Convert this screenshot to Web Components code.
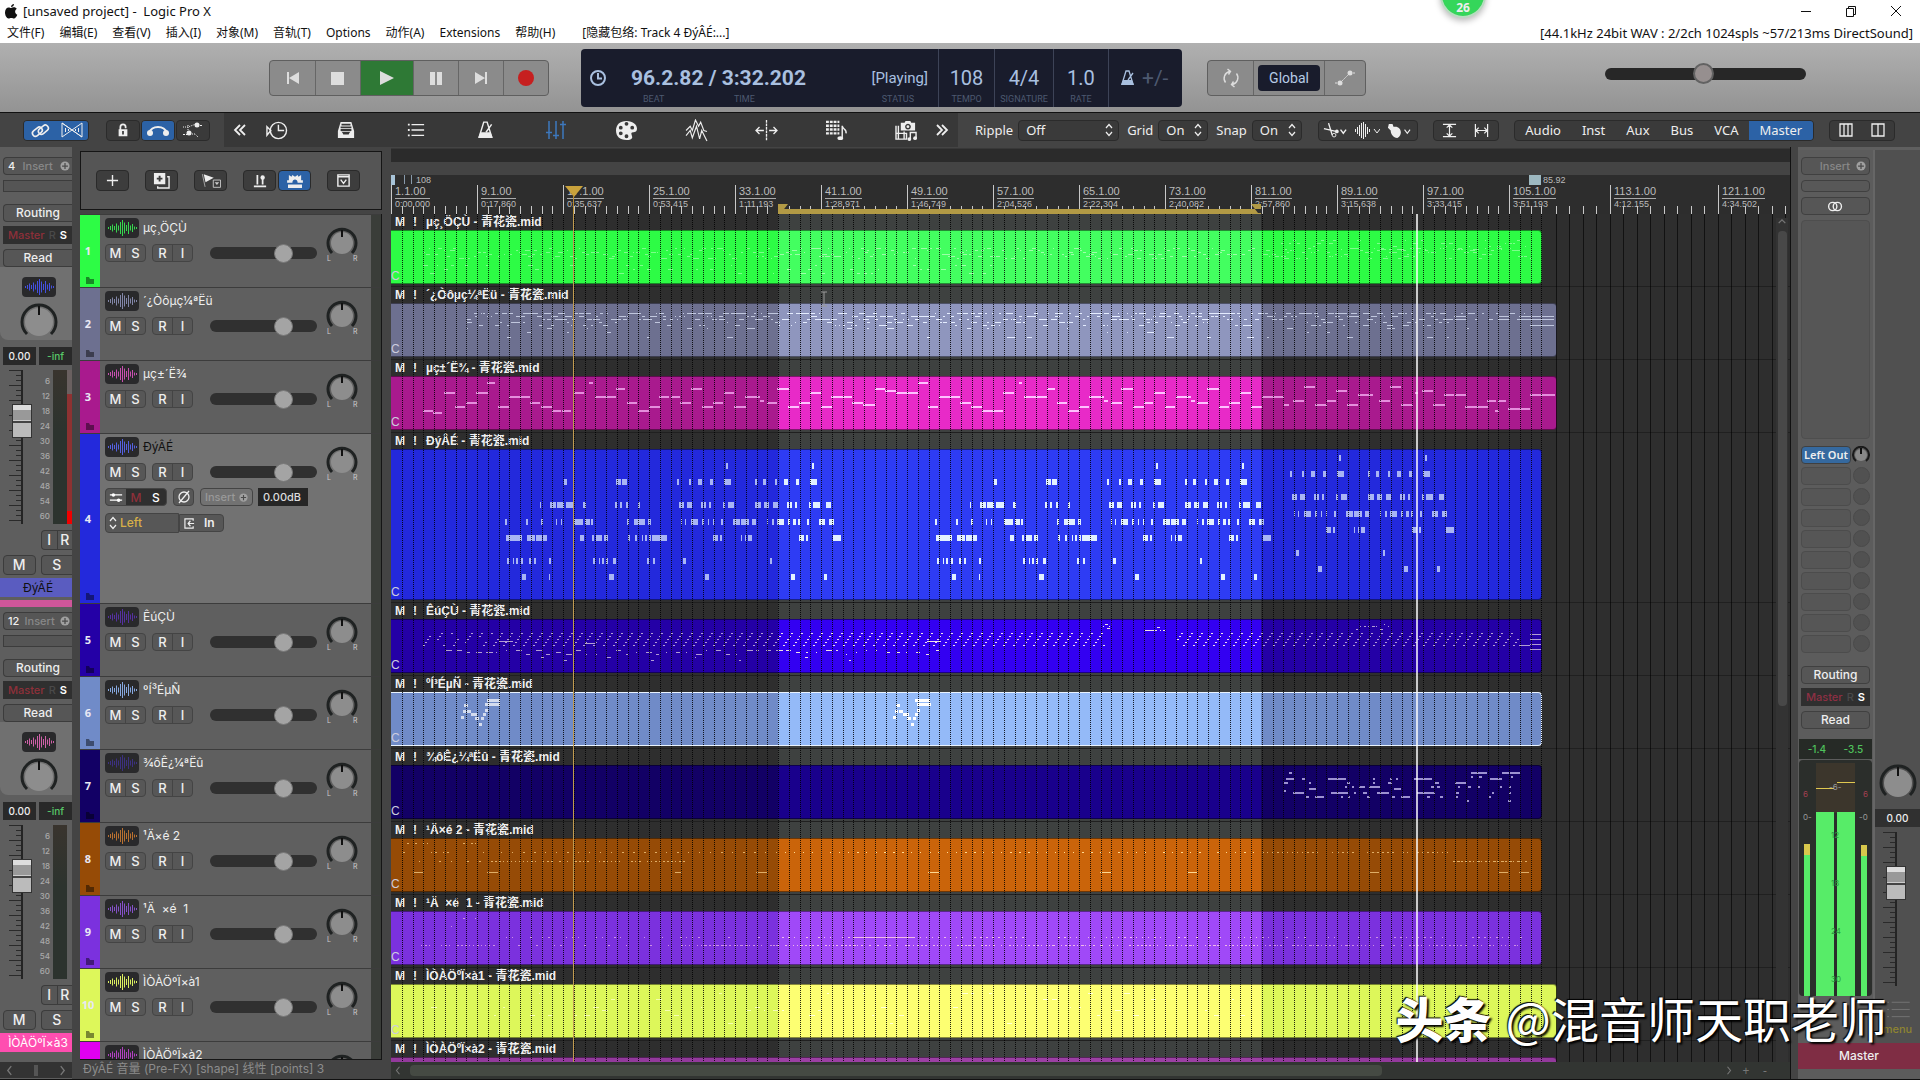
<!DOCTYPE html>
<html lang="zh-CN">
<head>
<meta charset="utf-8">
<title>[unsaved project] - Logic Pro X</title>
<style>
  html, body {
    margin: 0;
    height: 100%;
    overflow: hidden;
    background: #444;
  }
  body {
    --ui: "Noto Sans", "Noto Sans CJK SC", sans-serif;
    --strip: Inter, "Noto Sans CJK SC", sans-serif;
    --blue: #2c62a6;
    --line: #2b2b2b;
    font: 12px/16px var(--ui);
    color: #eee;
  }
</style>
</head>
<body>
<daw-app></daw-app>

<script>
const icons = {
  apple: ["0 0 16 16", `<path fill="currentColor" d="M11 1c0 2-1.400 3-3 3 0-1.700 1.300-2.800 3-3zM8 5c1 0 1.600-.7 3-.7 1.200 0 2.200.6 2.800 1.500-2.500 1.500-2 5 .5 6-.8 2-2 3.700-3.300 3.700-1 0-1.400-.6-2.700-.6s-1.700.6-2.700.6C3.600 15.500 2 12.300 2 9.500 2 6.400 3.800 4.500 5.700 4.500c1 0 1.600.5 2.300.5z"/>`],
  min: ["0 0 12 12", `<path stroke="currentColor" d="M1 6.500h10"/>`],
  restore: ["0 0 12 12", `<path fill="none" stroke="currentColor" d="M1.500 3.500h7v8h-7zM3.500 3.500v-2h7v8h-2"/>`],
  close: ["0 0 12 12", `<path stroke="currentColor" d="M1 1l10 10M11 1L1 11"/>`],
  rewind: ["0 0 16 16", `<path fill="currentColor" d="M2 2h2v12H2zM14 2v12L4 8z"/>`],
  stop: ["0 0 16 16", `<path fill="currentColor" d="M1 2h13v13H1z"/>`],
  play: ["0 0 16 16", `<path fill="currentColor" d="M1 1l14 7-14 7z"/>`],
  pause: ["0 0 16 16", `<path fill="currentColor" d="M2 2h5v13H2zM9 2h5v13H9z"/>`],
  forward: ["0 0 16 16", `<path fill="currentColor" d="M12 2h2v12h-2zM2 2v12l10-6z"/>`],
  record: ["0 0 16 16", `<circle cx="8" cy="8" r="8" fill="#c61f1f"/>`],
  clock: ["0 0 16 16", `<circle cx="8" cy="8" r="7" fill="none" stroke="currentColor" stroke-width="2"/><path fill="none" stroke="currentColor" stroke-width="2" d="M8 3v5.500h4"/>`],
  metro: ["0 0 16 16", `<path fill="none" stroke="currentColor" stroke-width="1.300" d="M6 1h3l4 13H2zM8 10l5-7"/><path fill="currentColor" d="M3 10h9l2 5H1z"/>`],
  loop: ["0 0 20 20", `<path fill="none" stroke="currentColor" stroke-width="1.400" d="M8.500 3.500a7 7 0 0 0-4 11M11.500 16.500a7 7 0 0 0 4-11M6.500 1l3 2.500-2 3M13.500 19l-3-2.500 2-3"/>`],
  points: ["0 0 20 20", `<path stroke="currentColor" stroke-dasharray="2 1" d="M5 15L15 5M0 15h5M15 5h5"/><circle cx="5" cy="15" r="2.500" fill="currentColor"/><circle cx="15" cy="5" r="2.500" fill="currentColor"/>`],
  envelope: ["0 0 22 18", `<path fill="none" stroke="currentColor" stroke-dasharray="1 1" d="M1 6h5l8-3M8 13h5l3 3M6 4v9"/><circle cx="7" cy="12" r="2.500" fill="currentColor"/><circle cx="15" cy="4" r="2.500" fill="currentColor"/><path stroke="currentColor" stroke-dasharray="2 1" d="M1 13.500h6M15 4.500h6"/>`],
  link: ["0 0 20 20", `<g fill="none" stroke="currentColor" stroke-width="1.600"><rect x="2" y="8" width="11" height="6" rx="3" transform="rotate(-40 7 11)"/><rect x="8" y="6" width="11" height="6" rx="3" transform="rotate(-40 13 9)"/></g>`],
  xfade: ["0 0 22 18", `<path fill="none" stroke="currentColor" d="M1 2v14L21 2v14zM1 2l20 14"/><path stroke="currentColor" d="M4.500 7v4M7.500 8v2M14.500 8v2M17.500 7v4"/>`],
  lock: ["0 0 16 16", `<path fill="none" stroke="currentColor" stroke-width="2" d="M5 8V4.500a3 3 0 0 1 6 0V6"/><path fill="currentColor" fill-rule="evenodd" d="M3 7h10v8H3zM7 9v4h2V9z"/>`],
  curve: ["0 0 24 12", `<path fill="none" stroke="currentColor" stroke-width="2" d="M3 9c3-8 15-8 18 0"/><circle cx="4" cy="9" r="3" fill="currentColor"/><circle cx="20" cy="9" r="3" fill="currentColor"/>`],
  left2: ["0 0 14 14", `<path fill="none" stroke="currentColor" stroke-width="1.800" d="M7 2L2 7l5 5M12 2L7 7l5 5"/>`],
  right2: ["0 0 14 14", `<path fill="none" stroke="currentColor" stroke-width="1.800" d="M2 2l5 5-5 5M7 2l5 5-5 5"/>`],
  history: ["0 0 24 22", `<circle cx="14" cy="11" r="8.500" fill="none" stroke="currentColor" stroke-width="1.500"/><path fill="none" stroke="currentColor" stroke-width="1.500" d="M14 5v6h6M2 7l4 4-4 5z"/>`],
  inbox: ["0 0 20 20", `<path fill="currentColor" fill-rule="evenodd" d="M4 1h12l3 10v8H1v-8zM5 3v2h10V3zM4 6v2h12V6zM4 9v2h12V9zM3 12c2 0 3 0 4 3h6c1-3 2-3 4-3z"/>`],
  list: ["0 0 20 20", `<path stroke="currentColor" stroke-width="1.500" d="M5 4h14M5 10h14M5 16h14"/><path stroke="currentColor" stroke-width="2" d="M1 4h2M1 10h2M1 16h2"/>`],
  mixer: ["0 0 22 20", `<path stroke="currentColor" stroke-width="1.500" d="M4 1v18M11 1v18M18 1v18M1 12.500h6M8 15.500h6M15 4.500h6"/>`],
  palette: ["0 0 24 22", `<path fill="currentColor" fill-rule="evenodd" d="M12 1c7 0 11 4 11 8s-3 4-5 4 0 3 0 5-3 3-6 3C5 21 1 17 1 11S5 1 12 1zM10 4a2 2 0 1 0 4 0 2 2 0 1 0-4 0zM4 8a2 2 0 1 0 4 0 2 2 0 1 0-4 0zM4 14a2 2 0 1 0 4 0 2 2 0 1 0-4 0zM16 8a2 2 0 1 0 4 0 2 2 0 1 0-4 0zM10 17a2 2 0 1 0 4 0 2 2 0 1 0-4 0z"/>`],
  wave: ["0 0 22 22", `<path fill="none" stroke="currentColor" stroke-width="1.100" d="M1 11l4-4 2 4L10 1l3 6 2-4 3 8 3 1M1 16l4-5 2 7 4-11 3 12 2-8 5 10"/>`],
  split: ["0 0 26 24", `<path fill="none" stroke="currentColor" stroke-width="1.500" d="M10 12H1M5 8l-4 4 4 4M16 12h9M21 8l4 4-4 4"/><path stroke="currentColor" stroke-width="1.500" stroke-dasharray="3 1" d="M13 0v24"/>`],
  gridnote: ["0 0 24 22", `<path stroke="currentColor" stroke-width="2.500" stroke-dasharray="3 1" d="M1 2h14M1 6h14M1 10h14M1 14h14"/><path fill="none" stroke="currentColor" stroke-width="1.500" d="M18 19V6c0 4 5 3 4 8"/><ellipse cx="16" cy="19" rx="3" ry="2" fill="currentColor"/>`],
  media: ["0 0 24 22", `<path fill="currentColor" fill-rule="evenodd" d="M6 3h4l1-2h5l1 2h4v8H6zM13.500 4a3 3 0 1 0 .1 0z"/><circle cx="13.500" cy="7" r="1.500" fill="currentColor"/><path fill="none" stroke="currentColor" stroke-width="1.500" d="M1 6v14h11v-6H1M3.500 6v14M9.500 12v8"/><path fill="none" stroke="currentColor" stroke-width="1.500" d="M16 20v-7h6v6"/><circle cx="15" cy="20" r="2" fill="currentColor"/><circle cx="21" cy="19" r="2" fill="currentColor"/>`],
  cut: ["0 0 26 18", `<path fill="none" stroke="currentColor" stroke-width="1.500" d="M1 7l13 3M6 1l4 13M19 8l3 4 3-4"/><circle cx="12" cy="14" r="2" fill="none" stroke="currentColor"/><circle cx="15" cy="10" r="2" fill="currentColor"/>`],
  wavedrop: ["0 0 26 18", `<path fill="none" stroke="currentColor" d="M1.500 8v3M3.500 6v7M5.500 4v11M7.500 2v15M9.500 1v17M11.500 3v13M13.500 6v7M15.500 8v3M20 8l3 4 3-4"/>`],
  tag: ["0 0 26 18", `<path fill="currentColor" d="M2 2h4l1 3c5-1 8 2 8 6 0 3-2 6-4 6-4 0-7-4-7-8L1 6z"/><path fill="none" stroke="currentColor" stroke-width="1.200" d="M19 8l3 4 3-4"/>`],
  vzoom: ["0 0 16 16", `<path fill="none" stroke="currentColor" stroke-width="1.300" d="M1 1.500h14M1 14.500h14M8 2v12M5 5l3-3 3 3M5 11l3 3 3-3"/>`],
  hzoom: ["0 0 16 16", `<path fill="none" stroke="currentColor" stroke-width="1.300" d="M1.500 1v14M14.500 1v14M2 8h12M5 5L2 8l3 3M11 5l3 3-3 3"/>`],
  cols4: ["0 0 14 14", `<path fill="none" stroke="currentColor" stroke-width="1.300" d="M1 1h12v12H1zM5 1v12M9 1v12"/>`],
  cols2: ["0 0 14 14", `<path fill="none" stroke="currentColor" stroke-width="1.300" d="M1 1h12v12H1zM7 1v12"/>`],
  plus: ["0 0 14 14", `<path stroke="currentColor" stroke-width="1.500" d="M7 1v12M1 7h12"/>`],
  dup: ["0 0 18 18", `<path fill="currentColor" fill-rule="evenodd" d="M1 1h12v12H1zM6 4v2H4v2h2v2h2V8h2V6H8V4z"/><path fill="none" stroke="currentColor" stroke-width="1.500" d="M15 5h2v12H5v-2"/>`],
  flag: ["0 0 22 16", `<path fill="currentColor" d="M3 1l11 4-9 5z"/><path stroke="#aaa" d="M1.500 1l3 14"/><path fill="none" stroke="#ccc" d="M13.500 7.500h8v8h-8z"/><path fill="#ccc" d="M15 10h5l-2.500 3z"/>`],
  meters: ["0 0 18 16", `<path stroke="currentColor" stroke-width="2" d="M2 14h14M6 1v11M12 5v7"/><circle cx="12" cy="4" r="2.500" fill="currentColor"/>`],
  crown: ["0 0 20 16", `<path fill="currentColor" d="M3 1l3 2 1-2 3 2 3-2 1 2 3-2v6h2v3h-6c0-5-6-5-6 0H1V7h2zM2 12h16v4H2z"/>`],
  popup: ["0 0 16 16", `<path fill="none" stroke="currentColor" stroke-width="1.500" d="M2 2h12v12H2zM2 4h12M5 7l3 4 3-4"/>`],
  add: ["0 0 12 12", `<circle cx="6" cy="6" r="5.500" fill="#a0a0a0"/><path stroke="#4a4a4a" stroke-width="1.500" d="M6 2.500v7M2.500 6h7"/>`],
  stereo: ["0 0 18 12", `<circle cx="6" cy="6" r="4.500" fill="none" stroke="currentColor" stroke-width="1.500"/><circle cx="11" cy="6" r="4.500" fill="none" stroke="currentColor" stroke-width="1.500"/>`],
  fx: ["0 0 16 12", `<path stroke="currentColor" stroke-width="1.500" d="M1 3h14M1 9h14"/><circle cx="5" cy="3" r="2" fill="currentColor"/><circle cx="11" cy="9" r="2" fill="currentColor"/>`],
  phase: ["0 0 14 14", `<circle cx="7" cy="7" r="5" fill="none" stroke="currentColor" stroke-width="1.300"/><path stroke="currentColor" stroke-width="1.300" d="M2 13L12 1"/>`],
  input: ["0 0 12 12", `<path fill="none" stroke="currentColor" stroke-width="1.300" d="M10 3V1H1v10h9V9M11 6H5M7 3L4.500 6 7 9"/>`],
  updown: ["0 0 8 14", `<path fill="none" stroke="currentColor" stroke-width="1.200" d="M1 5l3-3.500L7 5M1 9l3 3.500L7 9"/>`],
  folder: ["0 0 10 8", `<path fill="currentColor" d="M1 1h3l1 2h4v5H1z"/>`],
  lines: ["0 0 26 20", `<path stroke="#777" d="M1 2.500h2M6 2.500h20M1 10.500h2M6 10.500h20M1 18.500h2M6 18.500h20"/>`],
  larr: ["0 0 8 12", `<path fill="none" stroke="currentColor" stroke-width="1.500" d="M6 1L2 6l4 5"/>`],
  rarr: ["0 0 8 12", `<path fill="none" stroke="currentColor" stroke-width="1.500" d="M2 1l4 5-4 5"/>`],
  uarr: ["0 0 12 8", `<path fill="none" stroke="currentColor" stroke-width="1.500" d="M2 6l4-4 4 4"/>`],
};

const reset = `
  * { box-sizing: border-box; }
  button, select, input, output { font: inherit; color: inherit; margin: 0; }
  button { padding: 0; border: 0; background: none; display: grid; place-items: center; white-space: nowrap; }
`;

// Shared base: subclasses give css() and html(), drawn into an open root.
class Part extends HTMLElement {
  connectedCallback() {
    if (this.shadowRoot) return;
    this.attachShadow({ mode: "open" });
    this.shadowRoot.innerHTML = `<style>${reset}${this.css()}</style>${this.html()}`;
  }
  attr(name, fallback = "") {
    return this.getAttribute(name) ?? fallback;
  }
}

class DawIcon extends Part {
  css() {
    return `:host { display: block; flex: none; } svg { display: block; }`;
  }
  html() {
    const [box, body] = icons[this.attr("name")];
    const [, , w, h] = box.split(" ");
    const s = Number(this.attr("size", 16));
    return `<svg viewBox="${box}" width="${s}" height="${Math.round(s * h / w)}" aria-hidden="true">${body}</svg>`;
  }
}
customElements.define("daw-icon", DawIcon);

class WaveBadge extends Part {
  css() {
    return `:host { display: block; width: 34px; height: 20px; border-radius: 4px; background: #29292b; } svg { display: block; }`;
  }
  html() {
    const heights = [2, 4, 7, 4, 9, 5, 12, 16, 11, 6, 12, 5, 8, 3, 2];
    const d = heights.map((h, i) => `M${3 + i * 2}.5 ${10 - h / 2}v${h}`).join("");
    return `<svg width="34" height="20"><path d="${d}" stroke="${this.attr("color", "#fff")}"/></svg>`;
  }
}
customElements.define("wave-badge", WaveBadge);

class RotaryKnob extends Part {
  css() {
    return `:host { display: block; flex: none; } svg { display: block; } text { font: 7px var(--strip); fill: #ccc; }`;
  }
  html() {
    const r = Number(this.attr("r", 14));
    const c = r + 3;
    const k = Math.round(r * 0.7);
    const lr = this.hasAttribute("lr") ? `<text x="2" y="${c * 2 + 1}">L</text><text x="${c * 2 - 6}" y="${c * 2 + 1}">R</text>` : "";
    return `<svg width="${c * 2}" height="${c * 2 + 2}">
      <circle cx="${c}" cy="${c}" r="${r - 3}" fill="#8d8d8d"/>
      <path d="M${c - k} ${c + k}A${r} ${r} 0 1 1 ${c + k} ${c + k}" fill="none" stroke="#1f2222" stroke-width="3"/>
      <path d="M${c} ${c - r + 1}v${Math.round(r / 2)}" stroke="#111" stroke-width="2"/>${lr}</svg>`;
  }
}
customElements.define("rotary-knob", RotaryKnob);

class TitleBar extends Part {
  css() {
    return `
      :host { display: block; background: #fff; color: #111; }
      .row { display: flex; align-items: center; height: 22px; padding: 0 18px 0 3px; }
      .row b { font-weight: 400; font-size: 13px; margin-left: 4px; flex: 1; }
      .win { display: flex; gap: 33px; }
      nav { display: flex; align-items: center; height: 21px; padding: 0 7px; gap: 15px; white-space: nowrap; }
      a { color: inherit; text-decoration: none; }
      .env { margin-left: 12px; flex: 1; }
      .audio { font-size: 13px; }
    `;
  }
  html() {
    const menu = ["文件(F)", "编辑(E)", "查看(V)", "插入(I)", "对象(M)", "音轨(T)", "Options", "动作(A)", "Extensions", "帮助(H)"];
    return `
      <div class="row"><daw-icon name="apple" size="16"></daw-icon><b>[unsaved project] -&nbsp; Logic Pro X</b>
        <div class="win">
          <button aria-label="Minimize"><daw-icon name="min" size="12"></daw-icon></button>
          <button aria-label="Restore"><daw-icon name="restore" size="12"></daw-icon></button>
          <button aria-label="Close"><daw-icon name="close" size="12"></daw-icon></button>
        </div>
      </div>
      <nav>${menu.map((m) => `<a href="#">${m}</a>`).join("")}
        <span class="env">[隐藏包络: Track 4 ÐýÂÉ:...]</span>
        <span class="audio">[44.1kHz 24bit WAV : 2/2ch 1024spls ~57/213ms DirectSound]</span>
      </nav>`;
  }
}
customElements.define("title-bar", TitleBar);

class LcdDisplay extends Part {
  css() {
    return `
      :host { display: flex; flex: none; width: 601px; height: 58px; border-radius: 4px; background: #191c2c; color: #a9c0e0; font-family: Roboto, sans-serif; }
      .cell { display: grid; grid-template-rows: 56px; position: relative; justify-items: center; align-content: start; border-left: 1px solid #3d4357; }
      .cell span, .pos { font-size: 20px; line-height: 58px; }
      small { position: absolute; bottom: 2px; font-size: 9px; line-height: 12px; color: #4d5970; }
      .main { flex: 1; display: flex; align-items: center; position: relative; padding: 0 10px 0 9px; }
      .pos { font-size: 21px; font-weight: 700; margin-left: 25px; flex: 1; }
      .state { font-size: 15px; }
      .beat { left: 62px; } .time { left: 153px; } .status { right: 24px; }
      .click { width: 74px; display: flex; align-items: center; gap: 6px; padding-left: 11px; }
      .click span { color: #4d5970; font-size: 21px; }
    `;
  }
  html() {
    return `
      <div class="main"><daw-icon name="clock" size="16"></daw-icon><span class="pos">96.2.82 / 3:32.202</span><span class="state">[Playing]</span>
        <small class="beat">BEAT</small><small class="time">TIME</small><small class="status">STATUS</small></div>
      <div class="cell" style="width:56px"><span>108</span><small>TEMPO</small></div>
      <div class="cell" style="width:59px"><span>4/4</span><small>SIGNATURE</small></div>
      <div class="cell" style="width:55px"><span>1.0</span><small>RATE</small></div>
      <div class="cell click"><daw-icon name="metro" size="16"></daw-icon><span>+/-</span></div>`;
  }
}
customElements.define("lcd-display", LcdDisplay);

class TransportBar extends Part {
  css() {
    return `
      :host { display: flex; align-items: center; height: 70px; padding: 0 114px 0 269px; background: linear-gradient(#b0b0b0, #939393); border-bottom: 1px solid #111; }
      .group { display: flex; flex: none; height: 36px; border: 1px solid #5f5f5f; border-radius: 4px; background: #8b8b8b; color: #ddd; }
      .group button + button { border-left: 1px solid #666; }
      .group button { width: 45px; }
      .group .play { width: 53px; background: #2e7935; }
      lcd-display { margin: 0 25px 0 32px; }
      .group .global { width: 71px; }
      .global span { background: #191c2c; color: #b6cbe6; border-radius: 4px; padding: 4px 0; width: 62px; font: 14px/18px Roboto, sans-serif; }
      input { -webkit-appearance: none; appearance: none; width: 201px; height: 12px; border-radius: 6px; background: #272727; margin: 0 0 8px auto; }
      input::-webkit-slider-thumb { -webkit-appearance: none; width: 21px; height: 21px; border-radius: 50%; background: #968f8f; border: 2px solid #626262; }
    `;
  }
  html() {
    const b = (n, c = "") => `<button class="${c}" aria-label="${n}"><daw-icon name="${n}" size="16"></daw-icon></button>`;
    return `
      <div class="group">${b("rewind")}${b("stop")}${b("play", "play")}${b("pause")}${b("forward")}${b("record")}</div>
      <lcd-display></lcd-display>
      <div class="group"><button aria-label="Loop"><daw-icon name="loop" size="20"></daw-icon></button>
        <button class="global"><span>Global</span></button>
        <button style="width:41px" aria-label="Envelopes"><daw-icon name="points" size="20"></daw-icon></button></div>
      <input type="range" value="49" aria-label="Master volume">`;
  }
}
customElements.define("transport-bar", TransportBar);

class ToolSelect extends Part {
  css() {
    return `
      :host { display: flex; flex: none; align-items: center; gap: 5px; font-size: 13px; }
      .box { display: flex; align-items: center; position: relative; }
      select { -webkit-appearance: none; appearance: none; width: ${this.attr("w")}px; height: 21px; padding: 0 7px; border: 1px solid var(--line); border-radius: 4px; background: #3a3a3a; }
      daw-icon { position: absolute; right: 6px; }
    `;
  }
  html() {
    return `<label for="s"><slot></slot></label><span class="box"><select id="s"><option>${this.attr("value")}</option></select><daw-icon name="updown" size="8"></daw-icon></span>`;
  }
}
customElements.define("tool-select", ToolSelect);

class ToolBar extends Part {
  css() {
    return `
      :host { display: flex; align-items: stretch; height: 34px; background: #444; color: #eee; padding-right: 24px; }
      .left, .right { display: flex; align-items: center; }
      .left { padding: 0 14px 0 23px; gap: 1px; }
      .g { display: flex; flex: none; height: 21px; border: 1px solid var(--line); border-radius: 4px; background: #3a3a3a; overflow: hidden; }
      .g button { width: 32px; }
      .g .on { background: var(--blue); }
      .first { margin-right: 16px; }
      .mid { display: flex; flex: none; align-items: center; background: #383838; width: 734px; }
      .mid .edge { width: 32px; margin-right: 5px; }
      .mid .edge:last-child { margin: 0 0 0 5px; }
      .icons { display: flex; gap: 40px; }
      .icons button { width: 30px; }
      .right { flex: 1; padding-left: 17px; gap: 8px; }
      .right .g { margin-left: 7px; }
      .right .tools { margin-left: 8px; }
      .tabs { font-size: 13px; }
      .tabs button { width: auto; flex: 1 1 auto; }
    `;
  }
  html() {
    const b = (n, s, on = "") => `<button class="${on}" aria-label="${n}"><daw-icon name="${n}" size="${s}"></daw-icon></button>`;
    const names = ["history", "inbox", "list", "metro", "mixer", "palette", "wave", "split", "gridnote", "media"];
    return `
      <div class="left">
        <div class="g first">${b("link", 20, "on")}${b("xfade", 22, "on")}</div>
        <div class="g">${b("lock", 14)}</div><div class="g">${b("curve", 24, "on")}</div><div class="g">${b("envelope", 22)}</div>
      </div>
      <div class="mid"><button class="edge" aria-label="Back"><daw-icon name="left2" size="14"></daw-icon></button>
        <div class="icons">${names.map((n) => n === "mixer" ? `<button style="color:#3d78bd" aria-label="mixer"><daw-icon name="mixer" size="22"></daw-icon></button>` : b(n, n === "metro" || n === "list" || n === "inbox" ? 18 : 23)).join("")}</div>
        <button class="edge" aria-label="More"><daw-icon name="right2" size="14"></daw-icon></button></div>
      <div class="right">
        <tool-select value="Off" w="101">Ripple</tool-select>
        <tool-select value="On" w="50">Grid</tool-select>
        <tool-select value="On" w="50">Snap</tool-select>
        <div class="g tools" style="width:100px">${b("cut", 24)}${b("wavedrop", 26)}${b("tag", 24)}</div>
        <div class="g" style="width:66px">${b("vzoom", 15)}${b("hzoom", 15)}</div>
        <div class="g tabs" style="width:300px"><button>Audio</button><button>Inst</button><button>Aux</button><button>Bus</button><button>VCA</button><button class="on">Master</button></div>
        <div class="g" style="width:66px">${b("cols4", 14)}${b("cols2", 14)}</div>
      </div>`;
  }
}
customElements.define("tool-bar", ToolBar);

const faderCss = `
  input.fader { -webkit-appearance: none; appearance: none; writing-mode: vertical-lr; direction: rtl; width: 20px; height: 154px; background: linear-gradient(#242424, #242424) center / 2px 100% no-repeat; }
  input.fader::-webkit-slider-thumb { -webkit-appearance: none; width: 20px; height: 34px; border: 1px solid #333; background: linear-gradient(#ddd 0 5px, #999 5px 15px, #ccc 15px 16px, #444 16px 18px, #bbb 18px); }
`;
const faderTicks = (w) => {
  let d = "";
  for (let i = 0; i <= 30; i++) d += `M${i % 3 ? w - 5 : 0} ${i * 5}.5H${w}`;
  return `<svg class="ticks" width="${w}" height="154"><path d="${d}" stroke="#2a2a2a"/></svg>`;
};

class ChannelStrip extends Part {
  css() {
    return faderCss + `
      :host { display: flex; flex: none; flex-direction: column; padding: 5px 0 0 3px; font: 500 12px/16px var(--strip); background: #5e5e5e; }
      button, .box { height: 18px; border: 1px solid #3c3c3c; border-right: 0; border-radius: 4px 0 0 4px; background: #565656; }
      .ins { display: flex; align-items: center; justify-content: space-between; padding: 0 2px 0 4px; color: #888; font-size: 11px; }
      .ins b { color: #eee; font-weight: 500; }
      .empty { height: 12px; margin: 5px 0 12px; border-radius: 0; background: #555; }
      .rms { display: flex; height: 18px; margin: 4px 0 5px; background: #2f2f2f; color: #8e2f3a; padding: 0 5px; justify-content: space-between; line-height: 18px; font-size: 11px; }
      .rms i { font-style: normal; color: #4a4a4a; }
      .rms b { color: #fff; font-weight: 600; }
      .top { background: #707070; margin: 0 0 7px -3px; padding: 10px 0 0 6px; border-radius: 0 0 0 8px; display: flex; flex-direction: column; align-items: center; gap: 5px; height: 73px; }
      .vals { display: flex; gap: 3px; }
      .vals output { background: #292929; height: 18px; line-height: 18px; font-size: 10px; text-align: center; flex: 1; }
      .vals output + output { color: #58c868; }
      .meter { display: flex; height: 154px; margin: 5px 0 6px; }
      .meter .ticks { margin: 0 -9px 0 6px; }
      .scale { flex: none; width: 18px; font-size: 8px; line-height: 15px; color: #aaa; text-align: right; padding-top: 4px; }
      .bar { flex: none; width: 14px; margin-left: 3px; background: linear-gradient(#39342e, #2c332e 40%); }
      .peak { flex: 1; background: ${this.hasAttribute("clip") ? "linear-gradient(#6a6060 0 24px, #8e3232 24px 141px, #f00000 141px)" : "#5e5e5e"}; }
      .ir, .ms { display: flex; font-size: 14px; }
      .ir { margin: 0 0 5px 38px; }
      .ir button, .ms button { height: 20px; flex: 1; }
      .ir button + button { border-radius: 0; }
      .ms { gap: 5px; }
      .ms button:first-child { border-right: 1px solid #3c3c3c; border-radius: 4px; }
      .name { margin: 3px 0 3px -3px; height: 19px; line-height: 19px; padding-left: 4px; text-align: center; background: ${this.attr("color")}; color: ${this.attr("ink")}; font-weight: 400; white-space: nowrap; overflow: hidden; }
      .tail { height: 7px; margin-left: -3px; background: ${this.attr("tail", "transparent")}; }
    `;
  }
  html() {
    return `
      <button class="ins"><b>${this.attr("no")}</b><span>Insert</span><daw-icon name="add" size="10"></daw-icon></button>
      <div class="box empty"></div>
      <button>Routing</button>
      <div class="rms"><span>Master</span><i>R</i><b>S</b></div>
      <button>Read</button>
      <div class="top"><wave-badge color="${this.attr("wave")}"></wave-badge><rotary-knob r="17"></rotary-knob></div>
      <div class="vals"><output>0.00</output><output>-inf</output></div>
      <div class="meter">${faderTicks(12)}<input class="fader" type="range" value="72" aria-label="Volume">
        <div class="scale">6<br>12<br>18<br>24<br>30<br>36<br>42<br>48<br>54<br>60</div><div class="bar"></div><div class="peak"></div></div>
      <div class="ir"><button>I</button><button>R</button></div>
      <div class="ms"><button>M</button><button>S</button></div>
      <div class="name"><slot></slot></div><div class="tail"></div>`;
  }
}
customElements.define("channel-strip", ChannelStrip);

class TrackHeader extends Part {
  css() {
    const on = this.hasAttribute("selected");
    return `
      :host { display: grid; grid-template-columns: 20px minmax(0, 1fr) 10px; height: ${this.attr("height", 73)}px; flex: none; border-top: 1px solid #3c3c3c; font: 500 12px/18px var(--strip); }
      .no { background: ${this.attr("color")}; color: #e8e8f4; display: grid; place-items: center; font: 700 11px/14px var(--ui); position: relative; }
      .no span { padding-right: 4px; }
      .no daw-icon { position: absolute; bottom: 3px; left: 5px; color: rgba(0, 0, 0, .45); }
      .body { background: ${on ? "#727272" : "#5f5f5f"}; padding: 3px 0 0 5px; }
      .edge { background: #3a3d39; }
      .main { display: grid; grid-template: 20px 18px / 88px 107px 34px; row-gap: 6px; column-gap: 0; }
      .title { grid-column: 1 / 3; display: flex; align-items: center; gap: 4px; color: ${on ? "#111" : "#eee"}; font-weight: 400; white-space: pre; }
      .btns { display: flex; gap: 6px; }
      .pair { display: flex; border: 1px solid #444; border-radius: 4px; background: #575757; width: 41px; }
      .pair button { flex: 1; font-size: 13px; line-height: 16px; }
      .pair button + button { border-left: 1px solid #444; }
      input[type=range] { -webkit-appearance: none; appearance: none; width: 107px; height: 12px; border-radius: 6px; background: #303030; margin: 3px 0 0 17px; }
      input::-webkit-slider-thumb { -webkit-appearance: none; width: 19px; height: 19px; border-radius: 50%; background: #a4a4a4; border: 1px solid #777; }
      rotary-knob { grid-area: 1 / 3 / 3 / 4; align-self: end; margin-left: 25px; }
      .row { display: flex; margin-top: 7px; height: 19px; }
      .row > * { height: 18px; }
      .fx { display: flex; width: 62px; border: 1px solid #444; border-radius: 4px; background: #2f2f2f; overflow: hidden; }
      .fx button:first-child { width: 26px; background: #575757; }
      .fx button { flex: 1; color: #8e2f3a; }
      .fx button:last-child, .fx button:first-child { color: #fff; }
      .ph, .in, .sel { border: 1px solid #444; border-radius: 4px; background: #575757; }
      .ph { width: 21px; margin: 0 6px; }
      .in2 { display: flex; align-items: center; gap: 4px; width: 53px; border: 1px solid #444; border-radius: 4px; color: #999; padding-left: 4px; font-size: 11px; }
      .db { width: 50px; background: #262626; color: #ddd; border: 0; padding: 0 5px; margin-left: 5px; font-size: 11px; }
      .sel { -webkit-appearance: none; appearance: none; width: 74px; color: #d8b048; padding: 0 0 0 14px; border-radius: 4px 0 0 4px; }
      .pick { position: relative; display: flex; align-items: center; }
      .pick daw-icon { position: absolute; left: 4px; }
      .in { display: flex; align-items: center; justify-content: flex-start; gap: 9px; padding-left: 4px; width: 45px; border-radius: 0 4px 4px 0; font-weight: 600; }
    `;
  }
  html() {
    const extra = this.hasAttribute("selected") ? `
      <div class="row"><div class="fx"><button aria-label="FX"><daw-icon name="fx" size="14"></daw-icon></button><button>M</button><button>S</button></div>
        <button class="ph" aria-label="Phase"><daw-icon name="phase" size="14"></daw-icon></button>
        <button class="in2">Insert<daw-icon name="add" size="9"></daw-icon></button>
        <input class="db" type="text" value="0.00dB" aria-label="Gain"></div>
      <div class="row"><span class="pick"><select class="sel" aria-label="Input"><option>Left</option></select><daw-icon name="updown" size="8"></daw-icon></span>
        <button class="in"><daw-icon name="input" size="11"></daw-icon>In</button></div>` : "";
    return `
      <div class="no"><span>${this.attr("no")}</span><daw-icon name="folder" size="10"></daw-icon></div>
      <div class="body"><div class="main">
        <div class="title"><wave-badge color="${this.attr("wave")}"></wave-badge><slot></slot></div>
        <div class="btns"><div class="pair"><button>M</button><button>S</button></div><div class="pair"><button>R</button><button>I</button></div></div>
        <input type="range" value="73" aria-label="Volume">
        <rotary-knob r="14" lr></rotary-knob>
      </div>${extra}</div>
      <div class="edge"></div>`;
  }
}
customElements.define("track-header", TrackHeader);

// Bars are 10.75px wide at 108 bpm and 13.5px after the change to 85.92.
const barX = (n) => Math.round(n <= 107 ? n * 10.75 : 1151 + (n - 107) * 13.5);
const SEL = [387, 870];

function random(seed) {
  return () => {
    seed = (seed * 16807) % 2147483647;
    return seed / 2147483647;
  };
}
const run = (text, y, h) => text.split(" ").map((p) => { const [x, w] = p.split(","); return [+x, y, +w, h]; });

const verse = [
  ...run("335,2 421,2", 13, 6),
  ...run("173,3 225,5 231,5 286,2 298,2 307,4 319,3 333,7 364,2 372,3 384,2 393,4 405,3 419,7", 29, 6),
  ...run("149,1 159,6 166,7 175,8 192,3 224,2 229,2 235,2 247,2 288,5 296,5 310,2 313,2 318,2 332,2 337,6 364,6 373,5 382,5 396,2 399,2 404,2 418,2 422,7 435,5", 52, 6),
  ...run("114,2 135,2 150,2 165,1 170,1 183,9 194,5 200,2 236,2 243,11 257,3 290,1 294,1 300,7 311,2 317,1 322,1 330,2 342,7 350,8 361,4 376,1 381,2 386,7 397,2 402,3 407,2 416,2 428,6 438,5", 69, 6),
  ...run("115,16 136,8 145,6 152,4 189,4 201,2 205,6 213,4 237,2 244,2 251,1 254,2 258,2 261,15 322,5 329,2 350,1 354,1 357,4 408,5 415,2 442,8", 85, 6),
  ...run("116,2 122,1 125,2 130,2 138,2 143,2 158,2 202,2 208,1 211,2 215,2 222,3 256,2 262,2 292,3 379,2", 108, 6),
  ...run("131,4 158,1 218,5 314,4 400,4 433,3", 124, 6),
];

const melody = `32,10,33 42,9,35 53,11,15 64,10,29 75,11,25 85,12,15 96,8,5 107,11,29 118,21,19 139,10,25 150,11,29 161,9,33 171,9,33 183,10,15 198,4,5 204,21,19 225,9,11 236,10,25 247,11,33 258,11,29 268,10,19 280,9,19 289,11,25 300,11,11 311,11,29 322,10,25 333,10,15 343,12,29 354,15,19 369,4,23 376,10,25 386,12,11 397,11,29 408,11,25 419,11,15 430,11,29 440,21,19 461,11,25 472,12,27 484,10,11 494,11,13 505,22,15 527,10,5 537,10,29 548,21,19 569,11,25 580,11,29 591,21,33 612,11,15 628,3,5 633,23,19 656,8,11 666,10,25 677,11,33 688,10,29 698,15,19 713,4,23 720,11,25 730,12,11 742,11,29 753,9,25 763,11,15 774,10,29 785,15,19 800,4,23 806,11,25 816,12,11 828,10,29 838,11,25 849,11,15 860,11,29 871,22,19 893,5,27 902,11,23 913,11,9 924,12,27 936,9,23 945,11,13 956,11,27 967,15,17 988,11,23 999,11,9 1010,12,27 1024,3,15 1031,11,13 1042,12,27 1053,10,17 1064,11,17 1074,23,29 1096,9,23 1107,8,23 1104,4,33 1117,22,31 1139,25,17`;

const solo = "708,516,8 700,534,20 697,546,10 697,570,6 740,534,8 757,546,6 718,576,28 757,564,16 750,588,8 772,588,22 804,534,44 850,546,8 845,558,6 862,558,6 811,576,42 835,588,6 852,588,6 867,576,6 880,558,14 890,576,10 898,588,8 905,558,26 915,546,5 915,534,5 924,576,30 950,546,10 955,534,5 960,588,8 965,564,18 971,534,4 982,588,22 1015,534,44 1022,576,44 1047,588,8 1055,558,8 1065,546,10 1070,558,8 1077,588,8 1115,546,28 1117,576,8 1117,588,6 1122,558,6 1143,600,6 1147,558,8 1153,516,40 1155,528,6 1173,528,8 1170,558,6 1200,534,30 1197,588,6 1205,576,6 1230,516,18 1225,558,6 1245,600,8 1248,558,6 1248,576,6 1250,516,24 1252,528,5";

const scatter = (seed, from, to, step, ys, maxW, density = 1) => {
  const rnd = random(seed);
  const out = [];
  for (let x = from; x < to; x += step) {
    if (rnd() > density) continue;
    out.push([Math.round(x), ys[Math.floor(rnd() * ys.length)], 1 + Math.floor(rnd() * maxW), 1]);
  }
  return out;
};

const parts = {
  1: () => [...scatter(3, 32, 1140, 3, [17, 19, 21, 23, 25, 27], 5, .8), ...scatter(9, 32, 600, 7, [34, 38, 42], 5, .5), ...scatter(11, 890, 1140, 4, [9, 12, 15, 18], 4, .7)],
  2: () => [...scatter(5, 76, 1060, 4, [9, 12, 15, 18, 21], 6), ...scatter(6, 76, 1150, 7, [9, 9, 12, 15], 7), ...scatter(8, 76, 1100, 20, [24, 28, 33], 8, .6),
    [1064, 12, 11, 1], [1064, 15, 11, 1], [1107, 12, 11, 1], [1107, 15, 11, 1], [1128, 12, 35, 1], [1128, 15, 35, 1], [1139, 21, 24, 1]],
  3: () => melody.split(" ").map((s) => { const [x, w, y] = s.split(",").map(Number); return [x, y, w, 2]; }),
  4: () => [...verse, ...verse.map(([x, y, w, h]) => [x + 430, y, w, h]), ...verse.filter((n) => n[0] >= 286).map(([x, y, w, h]) => [x + 613, y - 8, w, h])],
  5: () => {
    const out = [];
    for (let i = 0, x = 32; x < 1128; x += 2, i++) {
      if (x > 712 && x < 785) continue;
      if (x < 100 && i % 7 > 3) continue;
      out.push([x, 25 - (i % 5) * 3, 2, 1]);
    }
    return [...out, ...scatter(17, 55, 550, 10, [30, 32, 34], 7), ...scatter(18, 150, 530, 22, [37, 40], 4, .6), [108, 21, 14, 1], [194, 23, 10, 1], [536, 21, 14, 1],
      ...scatter(4, 712, 722, 2, [4, 6, 8], 3), ...scatter(13, 754, 775, 3, [4, 7, 10], 3), ...scatter(14, 965, 1000, 4, [4, 6, 9], 3), [1139, 14, 11, 1], [1139, 19, 11, 1], [1139, 24, 11, 1], [1139, 29, 11, 1], [1128, 25, 11, 1]];
  },
  6: () => {
    const lick = [[96, 6, 13, 3], [94, 10, 15, 3], [70, 23, 3, 3], [72, 17, 3, 3], [73, 11, 4, 3], [76, 17, 4, 3], [80, 20, 6, 3], [84, 24, 4, 3], [88, 30, 3, 3], [90, 24, 3, 3], [92, 20, 3, 3], [94, 16, 3, 3]];
    return [...lick, ...lick.slice(2).map(([x, y, w, h]) => [x + 432, y, w, h]), [524, 6, 15, 3], [526, 10, 14, 3]];
  },
  7: () => solo.split(" ").map((s) => { const [x, y, w] = s.split(",").map(Number); return [Math.round(x / 2.45 + 609), Math.round(y / 3 - 166), Math.max(2, Math.round(w / 2.45)), 2]; }),
  8: () => [...scatter(21, 12, 95, 4, [4, 4, 13, 13, 22], 2, .8), ...scatter(22, 100, 300, 4, [22], 2, .8), ...scatter(23, 110, 380, 11, [13], 2), ...scatter(24, 385, 870, 9, [13], 2), ...scatter(25, 871, 1060, 5, [13], 2, .8), ...scatter(26, 1062, 1135, 4, [22], 3),
    ...run("22,11 96,11 284,7 365,11 537,11 709,11 796,10 978,10 1107,10 1128,10", 33, 1)],
  9: () => [...scatter(31, 30, 110, 4, [33], 2, .8), ...scatter(32, 115, 1130, 6, [25, 25, 33], 2, .9), ...scatter(33, 290, 1130, 4, [33], 2, .8), ...scatter(36, 60, 95, 12, [6, 14], 2), [462, 25, 62, 1]],
  10: () => [...scatter(41, 40, 880, 9, [8, 14, 22, 25, 30, 38], 6, .5)],
  11: () => [],
};

class TrackLane extends Part {
  css() {
    const { dim, lit, width, height } = this.track;
    return `
      :host { display: block; height: ${height}px; flex: none; border-bottom: 1px solid #202020; }
      .label { height: 16px; display: flex; align-items: center; font: 600 12px/16px "Liberation Sans", "Noto Sans CJK SC", sans-serif; color: #f0f0f0; padding-left: 4px; white-space: pre; }
      .label i { font-style: normal; width: 18px; font-weight: 700; }
      .label i + i { width: 13px; font-weight: 700; }
      .clip { position: relative; width: ${width}px; height: ${height - 19}px; border-radius: 0 4px 4px 0; border: 1px solid ${this.track.edge || "rgba(0, 0, 0, .45)"}; border-left: 0;
        background: linear-gradient(90deg, ${dim} ${SEL[0]}px, ${lit} ${SEL[0]}px ${SEL[1]}px, ${dim} ${SEL[1]}px) 0 0 / ${width}px 100%; }
      .clip svg { display: block; }
      .clip span { position: absolute; left: 0; bottom: 0; font: 12px/14px "Liberation Sans", sans-serif; color: #ccd; }
    `;
  }
  html() {
    const { name, no, width, height, note } = this.track;
    const d = parts[no]().map(([x, y, w, h]) => `M${x} ${y}h${w}v${h}h-${w}z`).join("");
    const stops = [0, SEL[0], SEL[0], SEL[1], SEL[1]].map((x, i) => `<stop offset="${x / 1165}" stop-color="${note}" stop-opacity="${i === 2 || i === 3 ? 1 : .7}"/>`).join("");
    const root = no === 11 ? "" : "<span>C</span>";
    return `<div class="label"><i>M</i><i>!</i><span>${name} - 青花瓷.mid</span></div>
      <div class="clip"><svg width="${width - 1}" height="${height - 21}"><linearGradient id="n" gradientUnits="userSpaceOnUse" x1="0" x2="1165">${stops}</linearGradient><path d="${d}" fill="url(#n)"/></svg>${root}</div>`;
  }
}
customElements.define("track-lane", TrackLane);

class TimeRuler extends Part {
  css() {
    return `
      :host { display: block; height: 39px; background: #2d2d2d; position: relative; overflow: hidden; font: 11px/12px "Liberation Sans", sans-serif; color: #bbb; }
      .mark { position: absolute; top: 10px; bottom: 0; border-left: 1px solid #c8c8c8; padding-left: 3px; }
      .mark span { display: block; line-height: 13px; border-bottom: 1px solid #aaa; }
      .mark small { display: block; font-size: 9px; line-height: 11px; }
      svg { position: absolute; inset: 0; }
      .tempo { position: absolute; top: 0; font-size: 9px; line-height: 10px; }
    `;
  }
  html() {
    const times = ["0:00.000", "0:17.860", "0:35.637", "0:53.415", "1:11.193", "1:28.971", "1:46.749", "2:04.526", "2:22.304", "2:40.082", "2:57.860", "3:15.638", "3:33.415", "3:51.193", "4:12.155", "4:34.502"];
    let d = "";
    for (let n = 1; n < 126; n++) if (n % 8) d += `M${barX(n)}.5 31v8`;
    return `${times.map((t, i) => `<div class="mark" style="left:${barX(i * 8)}px"><span>${i * 8 + 1}.1.00</span><small>${t}</small></div>`).join("")}
      <svg width="100%" height="39"><path d="${d}" stroke="#c8c8c8"/>
        <path d="M0 0h4v10H0z" fill="#a8c4d8"/><path d="M13.500 0v9M20.500 0v9" stroke="#89a"/><path d="M1138 0h12v10h-12z" fill="#9db8c0"/>
        <path d="M387 34h483v5H387zM387 29h10l-7 9h-3zM870 29h-10l7 9h3z" fill="#b29a45"/>
        <path d="M174 11h18l-9 11z" fill="#c9a23c"/><path d="M182.500 20v19" stroke="#b58d35"/></svg>
      <span class="tempo" style="left:25px">108</span><span class="tempo" style="left:1152px">85.92</span>`;
  }
}
customElements.define("time-ruler", TimeRuler);

class LaneGrid extends Part {
  css() {
    return `:host { position: absolute; inset: 0; pointer-events: none; } svg { display: block; width: 100%; height: 100%; }`;
  }
  html() {
    let s = "";
    for (let n = 1; n < 126; n++) {
      const x = barX(n) + .5;
      s += `<line x1="${x}" x2="${x}" y1="0" y2="100%" stroke="#000" ${n <= 107 ? `stroke-opacity=".85" stroke-dasharray="1 1"` : `stroke-opacity=".6"`}/>`;
    }
    return `<svg>${s}
      <line x1="182.500" x2="182.500" y1="0" y2="100%" stroke="#c09a50"/>
      <line x1="1026" x2="1026" y1="0" y2="100%" stroke="#fff" stroke-width="2" stroke-opacity=".75"/>
      <path d="M430 78h6M433 78v14M430 92h6" stroke="#999" fill="none"/></svg>`;
  }
}
customElements.define("lane-grid", LaneGrid);

const E = 1151, L = 1166;
const tracks = [
  { no: 1, name: "µç¸ÖÇÙ", dim: "#2dfc45", lit: "#43ff60", wave: "#36d84e", note: "#9dffa8", width: E },
  { no: 2, name: "´¿Òôµç¼ªËü", dim: "#6d7090", lit: "#8f96be", wave: "#8286a8", note: "#e4ecff", width: L },
  { no: 3, name: "µç±´Ë¾", dim: "#a91a8e", lit: "#e82ac8", wave: "#c850b0", note: "#ffc0ff", width: L },
  { no: 4, name: "ÐýÂÉ", dim: "#2329dc", lit: "#2e3cf4", wave: "#5560e0", note: "#e2f0ff", width: E, height: 170 },
  { no: 5, name: "ÊúÇÙ", dim: "#2400a6", lit: "#3300f2", wave: "#5530a0", note: "#f0e0e8", width: E },
  { no: 6, name: "ºÍ³ÉµÑ", dim: "#708bc8", lit: "#94baf8", wave: "#86a8e0", note: "#ffffff", width: E, edge: "#e8f2ff" },
  { no: 7, name: "¾ôÊ¿¼ªËû", dim: "#120065", lit: "#19008c", wave: "#3c3080", note: "#d8d0ff", width: E },
  { no: 8, name: "¹Ä×é 2", dim: "#964b06", lit: "#ca640a", wave: "#b87030", note: "#ffd890", width: E },
  { no: 9, name: "¹Ä  ×é  1", dim: "#7b31de", lit: "#a049f8", wave: "#8450c8", note: "#f0b8e8", width: E },
  { no: 10, name: "ÌÒÀÖºÏ×à1", dim: "#ddf75a", lit: "#fdff72", wave: "#dcf060", note: "#ffffd8", width: L },
  { no: 11, name: "ÌÒÀÖºÏ×à2", dim: "#933a9c", lit: "#9c40a4", wave: "#b040c0", note: "#fff", width: L, head: "#e000f0" },
];
tracks.forEach((t) => { t.height = t.height || 73; });

class TrackList extends Part {
  css() {
    return `
      :host { display: grid; grid-template-rows: 59px minmax(0, 1fr) 19px; padding-top: 4px; }
      .head { display: flex; align-items: center; border: 1px solid #151515; background: #555; padding-left: 15px; }
      .head button { width: 33px; height: 21px; border: 1px solid #2a2a2a; border-radius: 4px; background: #3d3d3d; margin-right: 16px; }
      .head .close { margin-right: 2px; }
      .head .on { background: var(--blue); }
      .tracks { display: flex; flex-direction: column; overflow: hidden; margin-top: 4px; border: solid #151515; border-width: 0 1px 1px 0; }
      .status { font: 12px/18px var(--strip); color: #8c8c8c; padding-left: 3px; white-space: nowrap; }
    `;
  }
  html() {
    const b = (n, s, c = "") => `<button class="${c}" aria-label="${n}"><daw-icon name="${n}" size="${s}"></daw-icon></button>`;
    return `
      <div class="head">${b("plus", 13)}${b("dup", 17)}${b("flag", 20)}${b("meters", 16, "close")}${b("crown", 18, "on")}${b("popup", 15)}</div>
      <div class="tracks">${tracks.map((t) => `<track-header no="${t.no === 11 ? "" : t.no}" color="${t.head || t.dim}" wave="${t.wave}" height="${t.height}" ${t.no === 4 ? "selected" : ""}>${t.name}</track-header>`).join("")}</div>
      <div class="status">ÐýÂÉ 音量 (Pre-FX) [shape] 线性 [points] 3</div>`;
  }
}
customElements.define("track-list", TrackList);

class ArrangeView extends Part {
  css() {
    return `
      :host { display: grid; grid-template-rows: 14px 13px 39px minmax(0, 1fr) 17px; padding-top: 1px; border-right: 1px solid #111; }
      .nav { background: #2b2b2b; border-top: 1px solid #383838; }
      .area { position: relative; overflow: hidden; background: linear-gradient(90deg, #2e2e2e ${SEL[0]}px, #3e4140 ${SEL[0]}px ${SEL[1]}px, #2e2e2e ${SEL[1]}px); }
      .vscroll { position: absolute; right: 2px; top: 4px; bottom: 0; width: 12px; background: #333; color: #777; display: flex; flex-direction: column; align-items: center; gap: 6px; }
      .vscroll i { width: 9px; height: 475px; border-radius: 4px; background: #484848; }
      .hscroll { display: flex; align-items: center; background: #323532; color: #777; padding: 0 20px 0 4px; gap: 9px; }
      .hscroll i { width: 972px; height: 11px; border-radius: 4px; background: #454a43; margin-right: auto; }
      .hscroll button { width: 10px; }
    `;
  }
  html() {
    return `
      <div class="nav"></div><div></div>
      <time-ruler></time-ruler>
      <div class="area"><div class="lanes"></div><lane-grid></lane-grid>
        <div class="vscroll"><daw-icon name="uarr" size="10"></daw-icon><i></i></div></div>
      <div class="hscroll"><daw-icon name="larr" size="6"></daw-icon><i></i><daw-icon name="rarr" size="6"></daw-icon><button>+</button><button>-</button></div>`;
  }
  connectedCallback() {
    super.connectedCallback();
    const lanes = this.shadowRoot.querySelector(".lanes");
    if (lanes.childElementCount) return;
    for (const track of tracks) {
      const lane = document.createElement("track-lane");
      lane.track = track;
      lanes.append(lane);
    }
  }
}
customElements.define("arrange-view", ArrangeView);

class MasterStrip extends Part {
  css() {
    return faderCss + `
      :host { display: grid; grid-template: minmax(0, 1fr) 26px 10px / 77px minmax(0, 1fr); font: 500 12px/16px var(--strip); background: #505050; border-top: 3px solid #5f5f5f; }
      .col { background: #5c5c5c; display: flex; flex-direction: column; padding: 7px 3px 0; border-right: 2px solid #666; }
      button, .box { height: 18px; border: 1px solid #404040; border-radius: 4px; background: #565656; flex: none; }
      .ins { display: flex; align-items: center; justify-content: flex-end; gap: 6px; padding-right: 3px; color: #888; font-size: 11px; }
      .thin { height: 12px; margin: 5px 0; background: #585858; }
      .plug { height: 219px; margin: 5px 0; background: #565656; border-color: #4e4e4e; }
      .send { display: flex; justify-content: space-between; align-items: center; height: 21px; flex: none; }
      .send button { width: 50px; height: 18px; }
      .send .out { background: #35699f; font: 600 11px/16px var(--ui); }
      .send i { width: 17px; height: 17px; border-radius: 50%; background: #515151; border: 1px solid #4a4a4a; }
      .send .slot { border-color: #4c4c4c; }
      .rms { display: flex; flex: none; height: 18px; margin: 4px 0 5px; background: #2f2f2f; color: #8e2f44; padding: 0 5px; justify-content: space-between; line-height: 18px; font-size: 11px; }
      .rms i { font-style: normal; color: #4a4a4a; } .rms b { color: #fff; font-weight: 600; }
      .peaks { display: flex; justify-content: space-around; height: 20px; flex: none; margin: 10px -2px 1px; background: #262a26; color: #4fc25c; font-size: 10px; line-height: 20px; }
      .vu { display: block; flex: none; margin: 0 -2px; }
      .vu text { font: 8px var(--strip); fill: #999; }
      .vu .dim { fill: #2a9a40; }
      .side { display: flex; flex-direction: column; align-items: center; padding-top: 613px; }
      .side output { width: 100%; height: 18px; line-height: 18px; margin: 4px 0 5px; background: #303030; text-align: center; font-size: 10px; }
      .side .fd { display: flex; margin-right: 6px; } .side .ticks { margin-right: -9px; }
      .menu { margin-top: 14px; height: 34px; border: 0; background: none; color: #8e8430; font-size: 11px; gap: 3px; padding: 0; }
      .name { grid-column: 1 / 3; background: #7f2d44; text-align: center; line-height: 26px; }
      .end { grid-column: 1 / 3; background: #5c5c5c; }
    `;
  }
  html() {
    const slots = Array(9).fill(`<div class="send"><button class="slot" aria-label="Send"></button><i></i></div>`).join("");
    const ticks = ["12", "18", "24", "30"].map((t, i) => `<text class="dim" x="32" y="${78 + i * 48}">${t}</text>`).join("");
    return `
      <div class="col">
        <button class="ins">Insert<daw-icon name="add" size="10"></daw-icon></button>
        <div class="box thin"></div>
        <button aria-label="Stereo"><daw-icon name="stereo" size="17"></daw-icon></button>
        <div class="box plug"></div>
        <div class="send"><button class="out">Left Out</button><svg width="18" height="18"><circle cx="9" cy="9" r="6" fill="#888"/><path d="M4 15A8 8 0 1 1 14 15" fill="none" stroke="#1a1a1a" stroke-width="2"/><path d="M9 2v6" stroke="#111" stroke-width="2"/></svg></div>
        ${slots}
        <button style="margin-top:12px">Routing</button>
        <div class="rms"><span>Master</span><i>R</i><b>S</b></div>
        <button>Read</button>
        <div class="peaks"><span>-1.4</span><span>-3.5</span></div>
        <svg class="vu" width="73" height="236">
          <rect width="73" height="236" rx="4" fill="#2b2e2b"/><path d="M17 3h39v50H17z" fill="#3c362c"/>
          <path d="M17 52h18v184H17zM38 52h18v184H38z" fill="#57ec68"/><path d="M5 90h6v146H5zM62 90h6v146h-6z" fill="#57ec68"/>
          <path d="M5 84h6v11H5zM62 85h6v11h-6z" fill="#d8c84c"/><path d="M17 28.500h18M38 22.500h18" stroke="#e0c850"/>
          <text x="30" y="30">-6-</text><text x="4" y="37" style="fill:#a04050">6</text><text x="64" y="37" style="fill:#a04050">6</text><text x="4" y="60">0-</text><text x="60" y="60">-0</text>${ticks}</svg>
      </div>
      <div class="side"><rotary-knob r="17"></rotary-knob><output>0.00</output>
        <div class="fd">${faderTicks(12)}<input class="fader" type="range" value="72" aria-label="Master fader"></div>
        <button class="menu"><daw-icon name="lines" size="24"></daw-icon>menu</button></div>
      <div class="name">Master</div><div class="end"></div>`;
  }
}
customElements.define("master-strip", MasterStrip);

class DawApp extends Part {
  css() {
    return `
      :host { display: grid; grid-template: auto auto auto minmax(0, 1fr) / minmax(0, 1fr); height: 100vh; position: relative; overflow: hidden; }
      main { display: grid; grid-template: minmax(0, 1fr) / 72px 302px minmax(0, 1fr) 122px; background: #444; border-bottom: 1px solid #111; }
      aside { display: flex; flex-direction: column; padding-top: 5px; background: #5e5e5e; overflow: hidden; }
      .scroll { display: flex; flex: none; align-items: center; justify-content: space-between; height: 16px; padding: 0 6px; background: #333; color: #777; }
      .scroll i { width: 4px; height: 11px; background: #555; }
      track-list { margin-left: 8px; width: 302px; }
      arrange-view { margin: 0 7px 0 17px; }
      .badge { position: absolute; top: -28px; left: 1440px; width: 46px; height: 46px; border-radius: 50%; background: #35d65a; border: 2px solid #b8dcc0; box-shadow: 0 3px 6px #bbb; display: grid; place-items: end center; font-weight: 700; }
      .caption { position: absolute; right: 33px; bottom: 33px; display: flex; align-items: center; gap: 14px; font: 48px/60px "Noto Sans CJK SC", sans-serif; color: #fff; text-shadow: 2px 2px 2px #000, -1px -1px 1px #000; white-space: nowrap; }
      .caption b { font-weight: 900; }
    `;
  }
  html() {
    return `
      <title-bar></title-bar>
      <transport-bar></transport-bar>
      <tool-bar></tool-bar>
      <main>
        <aside>
          <channel-strip no="4" wave="#4450e0" color="#5a5cc0" ink="#111" tail="#cf569a" clip>ÐýÂÉ</channel-strip>
          <channel-strip no="12" wave="#d060a8" color="#ff4eb0" ink="#fff">ÌÒÀÖºÏ×à3</channel-strip>
          <div class="scroll"><daw-icon name="larr" size="7"></daw-icon><i></i><daw-icon name="rarr" size="7"></daw-icon></div>
        </aside>
        <track-list></track-list>
        <arrange-view></arrange-view>
        <master-strip></master-strip>
      </main>
      <div class="badge">26</div>
      <div class="caption"><b>头条</b><span>@混音师天职老师</span></div>`;
  }
}
customElements.define("daw-app", DawApp);
</script>
</body>
</html>
